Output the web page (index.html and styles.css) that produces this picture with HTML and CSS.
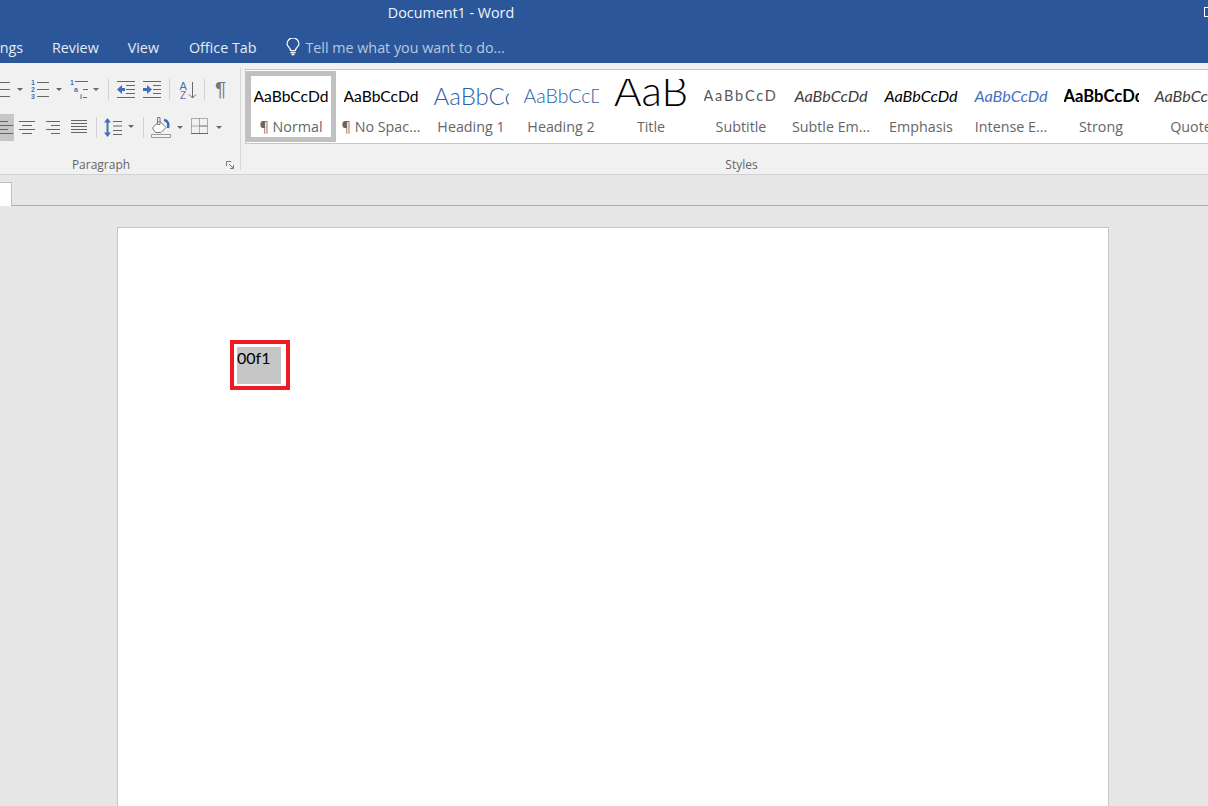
FILE: index.html
```html
<!DOCTYPE html>
<html lang="en">
<head>
<meta charset="utf-8">
<title>Document1 - Word</title>
<link rel="stylesheet" href="styles.css">
</head>
<body>
<header class="chrome">
  <div class="titlebar">
    <span class="doc-title">Document1 - Word</span>
    <span class="restore"></span>
  </div>
  <nav class="tabs">
    <span class="tab tab-cut">ngs</span>
    <span class="tab tab-review">Review</span>
    <span class="tab tab-view">View</span>
    <span class="tab tab-office">Office Tab</span>
    <svg class="bulb" width="14" height="19" viewBox="0 0 14 19"><path d="M4.500 12.500C4.500 9.500 1 8.500 1 6a6 6 0 0 1 12 0c0 2.500-3.500 3.500-3.500 6.500z" fill="none" stroke="#fff" stroke-width="1.200"/><path d="M4.500 14.500h5M5.500 16.500h3" stroke="#fff" stroke-width="1.400"/></svg>
    <span class="tell">Tell me what you want to do...</span>
  </nav>
</header>

<section class="ribbon">
  <div class="group group-para">
    <div class="tool-row row-top">
      <svg class="t" width="37" height="22" viewBox="0 0 37 22"><path d="M0 4.500h20M0 11.500h20M0 18.500h20" stroke="#666"/><path d="M27 10h6l-3 3z" fill="#666"/></svg>
      <svg class="t" width="38" height="22" viewBox="0 0 38 22"><g class="mini"><text x="4" y="7">1</text><text x="4" y="14">2</text><text x="4" y="21">3</text></g><path d="M10 4.500h12M10 11.500h12M10 18.500h12" stroke="#666"/><path d="M29 10h6l-3 3z" fill="#666"/></svg>
      <svg class="t" width="39" height="22" viewBox="0 0 39 22"><g class="mini"><text x="5" y="7">1</text><text x="9" y="14">a</text><text x="15" y="21">i</text></g><path d="M10 3.500h13M18 11.500h5M18 19.500h4" stroke="#666"/><path d="M28 10h6l-3 3z" fill="#666"/></svg>
      <span class="sep"></span>
      <svg class="t" width="26" height="22" viewBox="0 0 26 22"><path d="M4 3.500h18M13 7.500h9M13 11.500h9M13 15.500h9M4 19.500h18" stroke="#666"/><path d="M4 11.500l5-4.500v3h3v3H9v3z" fill="#3f72b5"/></svg>
      <svg class="t" width="26" height="22" viewBox="0 0 26 22"><path d="M4 3.500h18M14 7.500h8M14 11.500h8M14 15.500h8M4 19.500h18" stroke="#666"/><path d="M13 11.500L8 7v3H4v3h4v3z" fill="#3f72b5"/></svg>
      <span class="sep"></span>
      <svg class="t" width="26" height="22" viewBox="0 0 26 22"><text class="sort-a" x="5.500" y="12">A</text><text class="sort-z" x="6" y="21">Z</text><path d="M18.500 4v16M15 16.500l3.500 3.500 3.500-3.500" fill="none" stroke="#666"/></svg>
      <span class="sep"></span>
      <span class="pilcrow">¶</span>
    </div>
    <div class="tool-row row-bottom">
      <svg class="t align-active" width="14" height="27" viewBox="0 0 14 27"><path d="M0 7.500h8M0 11.500h13M0 15.500h8M0 19.500h13" stroke="#666"/></svg>
      <svg class="t" width="29" height="27" viewBox="0 0 29 27"><path d="M5 7.500h16M8 11.500h10M5 15.500h16M8 19.500h10" stroke="#666"/></svg>
      <svg class="t" width="25" height="27" viewBox="0 0 25 27"><path d="M3 7.500h14M8 11.500h9M3 15.500h14M8 19.500h9" stroke="#666"/></svg>
      <svg class="t" width="24" height="27" viewBox="0 0 24 27"><path d="M3 6.500h16M3 9.500h16M3 12.500h16M3 15.500h16M3 18.500h16" stroke="#666"/></svg>
      <span class="sep"></span>
      <svg class="t" width="38" height="27" viewBox="0 0 38 27"><path d="M12 7.500h9M12 12h9M12 16.500h9M12 20.500h9" stroke="#666"/><path d="M10 8.500L6.500 4 3 8.500h2.500v10H3L6.500 23l3.500-4.500H7.500v-10z" fill="#3f72b5"/><path d="M27 11h6l-3 3z" fill="#666"/></svg>
      <span class="sep"></span>
      <svg class="t" width="43" height="27" viewBox="0 0 43 27"><path d="M4.500 14l7-7 6.500 6.500-5 5h-5.500z" fill="#fff" stroke="#777"/><path d="M9.500 3.500h2.500v7h-2.500z" fill="none" stroke="#777"/><path d="M16 6c4 .5 5 4 4 8" fill="none" stroke="#2f6fb5" stroke-width="2.400"/><path d="M3.500 20.500h19v3h-19z" fill="#f6f6f6" stroke="#999"/><path d="M29 12h6l-3 3z" fill="#666"/></svg>
      <svg class="t" width="39" height="27" viewBox="0 0 39 27"><path d="M.5 4.500h16v15H.5zM8.500 4.500v15M.5 12h8" fill="none" stroke="#666" stroke-dasharray="1 1"/><path d="M0 19.500h17M8.500 12h8" stroke="#666"/><path d="M25 12h6l-3 3z" fill="#666"/></svg>
    </div>
    <div class="group-foot foot-para">
      <span class="group-label">Paragraph</span>
      <svg class="launcher" width="8" height="8" viewBox="0 0 8 8"><path d="M.5 5V.5H5M3 3l4 4M7.500 4v3.500H4" fill="none" stroke="#777"/></svg>
    </div>
  </div>
  <div class="group group-styles">
    <div class="gallery">
      <div class="style active"><span class="preview p-normal">AaBbCcDd</span><span class="name">¶ Normal</span></div>
      <div class="style"><span class="preview p-normal">AaBbCcDd</span><span class="name">¶ No Spac...</span></div>
      <div class="style"><span class="preview p-h1">AaBbCcDd</span><span class="name">Heading 1</span></div>
      <div class="style"><span class="preview p-h2">AaBbCcDd</span><span class="name">Heading 2</span></div>
      <div class="style"><span class="preview p-title">AaB</span><span class="name">Title</span></div>
      <div class="style"><span class="preview p-subtitle">AaBbCcDd</span><span class="name">Subtitle</span></div>
      <div class="style"><span class="preview p-subtle">AaBbCcDd</span><span class="name">Subtle Em...</span></div>
      <div class="style"><span class="preview p-emph">AaBbCcDd</span><span class="name">Emphasis</span></div>
      <div class="style"><span class="preview p-intense">AaBbCcDd</span><span class="name">Intense E...</span></div>
      <div class="style"><span class="preview p-strong">AaBbCcDd</span><span class="name">Strong</span></div>
      <div class="style"><span class="preview p-subtle">AaBbCcDd</span><span class="name">Quote</span></div>
    </div>
    <div class="group-foot foot-styles"><span class="group-label">Styles</span></div>
  </div>
</section>

<div class="docbar"><span class="doctab"></span></div>

<main class="workspace">
  <article class="page">
    <div class="callout"><div class="field">00f1</div></div>
  </article>
</main>
</body>
</html>
```

FILE: styles.css
```css
* { box-sizing: border-box; }
html, body { margin: 0; height: 100%; overflow: hidden; }
body {
  display: flex;
  flex-direction: column;
  height: 806px;
  font-family: "Open Sans", sans-serif;
  background: #e6e6e6;
}

.chrome { background: #2b579a; height: 63px; color: #fff; flex: none; overflow: hidden; }
.titlebar { height: 34px; display: flex; justify-content: center; padding: 3px 306px 0 0; position: relative; }
.doc-title { font-size: 14.300px; line-height: 20px; color: #f2f5fa; }
.restore { position: absolute; right: -6px; top: 7px; width: 10px; height: 10px; border: 1px solid #fff; }

.tabs { display: flex; align-items: center; height: 26px; font-size: 14.300px; white-space: nowrap; color: #e6ebf4; }
.tab { display: block; }
.tab-cut { width: 23px; direction: rtl; overflow: hidden; }
.tab-review { margin-left: 29px; }
.tab-view { margin-left: 29px; }
.tab-office { margin-left: 30px; }
.bulb { margin-left: 30px; flex: none; }
.tell { margin-left: 5px; color: #b8c8e0; }

.ribbon { height: 112px; background: #f1f1f1; border-bottom: 1px solid #d2d2d2; display: flex; flex: none; overflow: hidden; }
.group { position: relative; display: flex; flex-direction: column; }
.group-para { width: 241px; flex: none; border-right: 1px solid #d6d6d6; margin: 5px 0 4px; padding-top: 10px; }
.tool-row { display: flex; align-items: center; }
.row-top { margin-left: -10px; height: 22px; }
.row-bottom { height: 27px; margin-top: 14px; }
.t { flex: none; display: block; }
.mini text { font-family: "Liberation Sans", sans-serif; font-size: 7px; font-weight: 700; fill: #3f72b5; }
.sort-a { font-family: "Liberation Sans", sans-serif; font-size: 11px; fill: #3f72b5; }
.sort-z { font-family: "Liberation Sans", sans-serif; font-size: 10px; fill: #8a5ca8; }
.pilcrow { margin-left: 6px; font-family: "Liberation Sans", sans-serif; font-size: 21px; line-height: 22px; color: #777; }
.align-active { background: #c6c6c6; }
.sep { flex: none; width: 1px; height: 21px; background: #d2d2d2; margin: 0 4px; }
.group-foot { position: absolute; left: 0; right: 0; bottom: 0; height: 18px; display: flex; justify-content: center; align-items: center; }
.foot-para { bottom: -4px; padding-right: 38px; }
.foot-styles { padding-left: 34px; bottom: 0; }
.group-label { font-size: 12px; line-height: 18px; color: #666; }
.launcher { position: absolute; right: 6px; top: 5px; }

.group-styles { flex: 1; min-width: 0; padding: 6px 0 0 4px; }
.gallery { display: flex; height: 75px; background: #fff; border: 1px solid #c6c6c6; border-right: 0; padding-top: 1px; overflow: hidden; }
.style { flex: none; width: 90px; height: 71px; display: flex; flex-direction: column; align-items: center; padding: 5px 5px 0; }
.style.active { border: 5px solid #c0c0c0; padding: 0; }
.preview { display: block; width: 75px; height: 32px; margin-top: 3px; overflow: hidden; white-space: nowrap; font-family: Lato, sans-serif; font-size: 15.600px; line-height: 34px; text-align: center; color: #000; flex: none; }
.name { display: block; font-size: 14.300px; line-height: 20px; color: #666; white-space: nowrap; margin-top: 6px; }
.p-h1 { font-size: 24px; font-weight: 300; color: #2b63a8; text-align: left; }
.p-h2 { font-size: 19.500px; font-weight: 300; color: #2b63a8; text-align: left; }
.p-title { font-size: 42px; font-weight: 300; line-height: 23px; }
.p-subtitle { width: 73px; margin-right: 2px; color: #595959; letter-spacing: 1.800px; font-size: 14.500px; text-align: left; }
.p-subtle { font-style: italic; color: #404040; font-size: 16.200px; }
.p-emph { font-style: italic; font-size: 16.200px; }
.p-intense { font-style: italic; color: #4472c4; font-size: 16.200px; }
.p-strong { font-weight: 700; font-size: 16.600px; text-align: left; }

.docbar {
  height: 31px;
  flex: none;
  border-bottom: 1px solid #acacac;
  display: flex;
  align-items: flex-end;
  background-color: #e6e6e6;
  background-image: radial-gradient(#ebebeb 0.6px, transparent 0.8px);
  background-size: 4px 4px;
}
.doctab { display: block; width: 12px; height: 24px; margin-bottom: -1px; background: #fff; border: 1px solid #c0c0c0; border-left: 0; border-bottom: 0; }

.workspace {
  flex: 1;
  min-height: 0;
  overflow: hidden;
  display: flex;
  padding: 21px 100px 0 117px;
  background-color: #e6e6e6;
  background-image: radial-gradient(#ebebeb 0.6px, transparent 0.8px);
  background-size: 4px 4px;
}
.page { width: 992px; background: #fff; border: 1px solid #c6c6c6; border-bottom: 0; padding: 112px 0 0 112px; height: 600px; flex: none; }
.callout { width: 60px; height: 50px; border: 4px solid #ed1c24; padding: 3px; }
.field { width: 44px; height: 37px; background: #c6c6c6; font-family: Lato, sans-serif; font-size: 16px; line-height: 22px; color: #000; }
```
